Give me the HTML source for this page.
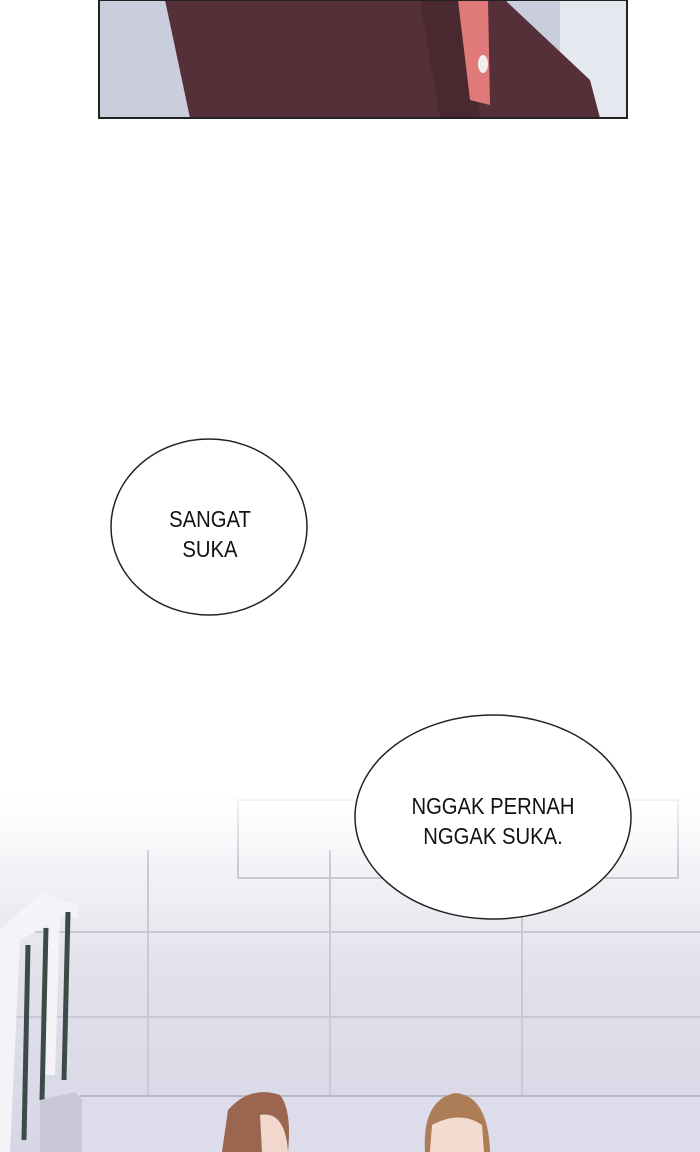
<!DOCTYPE html>
<html><head><style>
body{margin:0;width:700px;height:1152px;position:relative;overflow:hidden;background:#fff;font-family:"Liberation Sans",sans-serif}
.a{position:absolute}
.t{position:absolute;text-align:center;font-size:23px;line-height:30px;color:#111;transform:scaleX(0.88)}
</style></head><body>
<svg class="a" style="left:0;top:0" width="700" height="1152">
<defs>
<linearGradient id="bg" x1="0" y1="0" x2="0" y2="1">
<stop offset="0" stop-color="#fff"/>
<stop offset="0.25" stop-color="#f2f2f6"/>
<stop offset="0.5" stop-color="#e2e2ec"/>
<stop offset="1" stop-color="#d6d6e6"/>
</linearGradient>
<linearGradient id="fade" x1="0" y1="0" x2="0" y2="1">
<stop offset="0" stop-color="#fff" stop-opacity="1"/>
<stop offset="1" stop-color="#fff" stop-opacity="0"/>
</linearGradient>
</defs>
<rect x="99" y="0" width="528" height="118" fill="#c9cddc"/>
<rect x="560" y="0" width="67" height="118" fill="#e6e8f0"/>
<path d="M165 0 L505 0 L590 80 L600 118 L190 118 Z" fill="#563038"/>
<path d="M420 0 L470 0 L480 118 L440 118 Z" fill="#4a2830"/>
<path d="M458 0 L488 0 L490 105 L470 100 Z" fill="#e07a78"/>
<ellipse cx="483" cy="64" rx="5" ry="9" fill="#eee"/>
<rect x="99" y="0" width="528" height="118" fill="none" stroke="#222" stroke-width="2"/>
<rect x="0" y="780" width="700" height="372" fill="url(#bg)"/>
<g stroke="#c8c8d6" stroke-width="2" fill="none">
<line x1="0" y1="932" x2="700" y2="932"/>
<line x1="0" y1="1017" x2="700" y2="1017"/>
<line x1="148" y1="850" x2="148" y2="1095"/>
<line x1="330" y1="850" x2="330" y2="1095"/>
<line x1="522" y1="850" x2="522" y2="1095"/>
<rect x="238" y="800" width="440" height="78"/>
</g>
<rect x="0" y="780" width="700" height="90" fill="url(#fade)"/>
<rect x="80" y="1096" width="620" height="56" fill="#dcdcea"/>
<line x1="80" y1="1096" x2="700" y2="1096" stroke="#b8b8c8" stroke-width="2"/>
<path d="M0 930 L40 893 L78 905 L78 918 L60 915 L55 1075 L45 1075 L48 925 L20 940 L10 1152 L0 1152 Z" fill="#f4f4f8"/>
<g stroke="#3c4a48" stroke-width="5">
<line x1="68" y1="912" x2="64" y2="1080"/>
<line x1="46" y1="928" x2="42" y2="1100"/>
<line x1="28" y1="945" x2="24" y2="1140"/>
</g>
<path d="M40 1100 L75 1092 L82 1100 L82 1152 L40 1152 Z" fill="#c8c8d6"/>
<path d="M222 1152 L228 1110 Q250 1085 280 1095 Q292 1110 288 1152 Z" fill="#9a6650"/>
<path d="M260 1115 Q285 1110 288 1152 L262 1152 Z" fill="#f2d8cc"/>
<path d="M425 1152 Q422 1100 455 1093 Q488 1095 490 1152 Z" fill="#ad7d58"/>
<path d="M432 1125 Q460 1110 482 1125 L484 1152 L430 1152 Z" fill="#f4dcd0"/>
<ellipse cx="209" cy="527" rx="98" ry="88" fill="#fff" stroke="#222" stroke-width="1.5"/>
<ellipse cx="493" cy="817" rx="138" ry="102" fill="#fff" stroke="#222" stroke-width="1.5"/>
</svg>
<div class="t" style="left:130px;top:504px;width:160px">SANGAT<br>SUKA</div>
<div class="t" style="left:383px;top:791px;width:220px">NGGAK PERNAH<br>NGGAK SUKA.</div>
</body></html>
